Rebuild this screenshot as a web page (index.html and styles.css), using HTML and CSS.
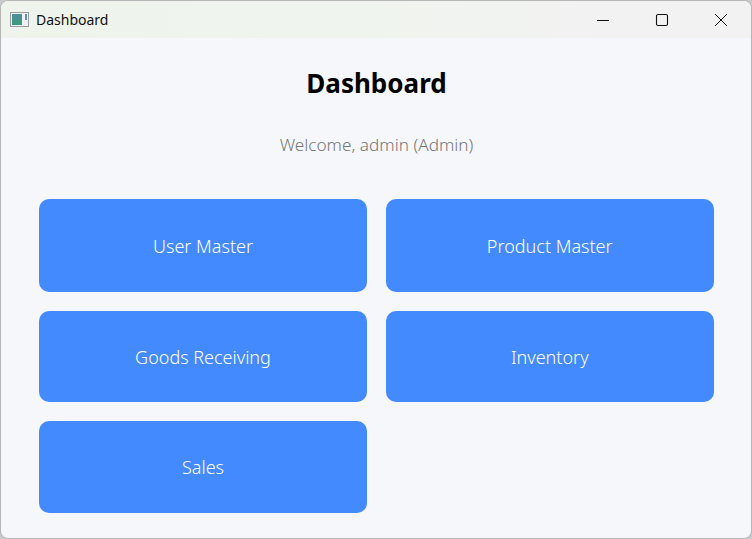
FILE: index.html
```html
<!DOCTYPE html>
<html lang="en">
<head>
<meta charset="utf-8">
<title>Dashboard</title>
<link rel="stylesheet" href="styles.css">
</head>
<body>
<div class="window">
  <header class="titlebar">
    <svg class="app-icon" width="20" height="16" viewBox="0 0 20 16">
      <rect x="0.5" y="0.5" width="18" height="14" fill="#eef1f4" stroke="#9a9ea3"/>
      <rect x="2" y="2" width="10" height="11" fill="#4a8f96"/>
      <rect x="2" y="8" width="10" height="5" fill="#3f9a82"/>
      <rect x="15" y="2" width="2" height="6" fill="#5f97a8"/>
    </svg>
    <span class="title">Dashboard</span>
    <div class="controls">
      <svg class="ctl" width="14" height="14" viewBox="0 0 14 14"><path d="M1 7.5h12" stroke="#111" fill="none"/></svg>
      <svg class="ctl" width="14" height="14" viewBox="0 0 14 14"><rect x="1.5" y="1.5" width="11" height="11" rx="1.5" stroke="#111" stroke-width="1.1" fill="none"/></svg>
      <svg class="ctl" width="14" height="14" viewBox="0 0 14 14"><path d="M1 1l12 12M13 1L1 13" stroke="#111" fill="none"/></svg>
    </div>
  </header>
  <main class="content">
    <h1 class="heading">Dashboard</h1>
    <p class="welcome">Welcome, admin (Admin)</p>
    <div class="grid">
      <button class="tile">User Master</button>
      <button class="tile">Product Master</button>
      <button class="tile">Goods Receiving</button>
      <button class="tile">Inventory</button>
      <button class="tile">Sales</button>
    </div>
  </main>
</div>
</body>
</html>
```
FILE: styles.css
```css
* { box-sizing: border-box; }
html, body { margin: 0; height: 100%; background: #c9c9c9; overflow: hidden; }
body { font-family: "Noto Sans", "Open Sans", sans-serif; }
.window {
  width: 752px;
  height: 539px;
  background: #f5f7fb;
  border: 1px solid #b5b5b5;
  border-radius: 8px;
  overflow: hidden;
  display: flex;
  flex-direction: column;
}
.titlebar {
  height: 37px;
  flex: none;
  display: flex;
  align-items: center;
  padding-left: 9px;
  background: linear-gradient(90deg, #eef3ec 0%, #f0f4ee 50%, #f2f2f2 80%, #f2f2f2 100%);
}
.app-icon { margin-right: 6px; }
.title { font-size: 14px; color: #111; }
.controls { margin-left: auto; display: flex; }
.ctl { width: 14px; height: 14px; margin-right: 45px; }
.ctl:last-child { margin-right: 23px; }
.content {
  flex: 1;
  display: flex;
  flex-direction: column;
  align-items: stretch;
  padding: 0 37px 0 38px;
}
.heading {
  margin: 25px 0 0;
  height: 40px;
  line-height: 40px;
  text-align: center;
  font-size: 26px;
  font-weight: 700;
  color: #000;
}
.welcome {
  margin: 28px 0 0;
  height: 28px;
  line-height: 28px;
  text-align: center;
  font-size: 17.2px;
  font-weight: 300;
  color: #777;
}
.grid {
  margin-top: 40px;
  display: grid;
  grid-template-columns: 328px 327.5px;
  grid-template-rows: 93px 91px 92px;
  column-gap: 19px;
  row-gap: 19px;
}
.tile {
  border: none;
  border-radius: 10px;
  background: #448aff;
  color: #fff;
  font-family: inherit;
  font-size: 18px;
  font-weight: 300;
  padding: 0;
}
```
